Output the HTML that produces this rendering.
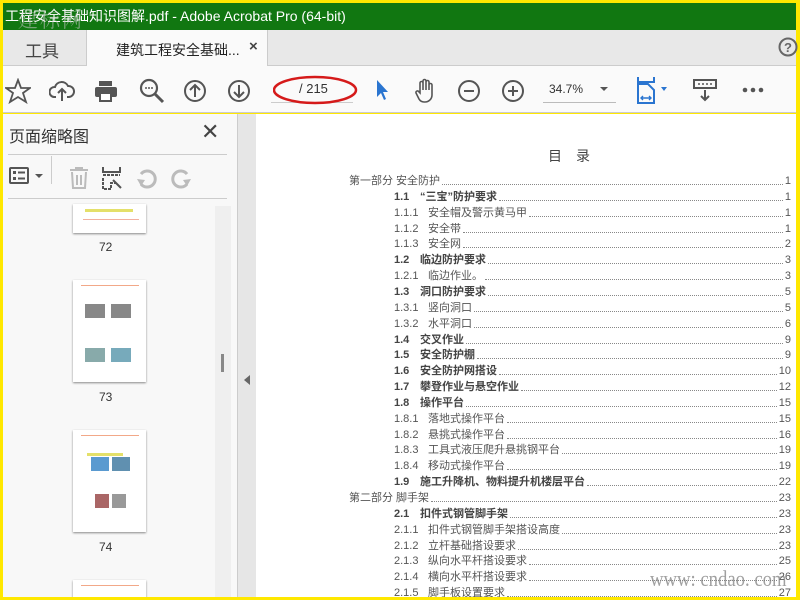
<!DOCTYPE html>
<html style="overflow:hidden"><head><meta charset="utf-8"><style>
*{margin:0;padding:0;box-sizing:border-box}
html,body{width:800px;height:600px;overflow:hidden}
body{background:#ffe800;position:relative;font-family:"Liberation Sans","Noto Sans CJK SC",sans-serif}
.abs{position:absolute}
#title{left:3px;top:3px;width:793px;height:27px;background:#117711;color:#fff;font-size:14px;line-height:27px;padding-left:2px;white-space:nowrap}
#tabs{left:3px;top:30px;width:793px;height:36px;background:#e8e8e8;border-bottom:1px solid #ccc}
#tb{left:3px;top:66px;width:793px;height:47px;background:#fafafa;border-bottom:1px solid #ccc}
#side{left:3px;top:114px;width:234px;height:483px;background:#f8f8f8}
#split{left:237px;top:114px;width:19px;height:483px;background:#e6e6e6;border-left:1px solid #ccc}
#page{left:256px;top:114px;width:540px;height:483px;background:#fff}
.row{position:absolute;left:349px;width:442px;height:15px;display:flex;align-items:flex-end;font-size:11px;color:#555;line-height:13px;white-space:nowrap}
.row .d{flex:1;border-bottom:1px dotted #888;margin:0 2px 3px 2px}
.b{font-weight:bold;color:#444}
svg{position:absolute}
.th{position:absolute;left:70px;width:73px;background:#fff;box-shadow:0 1px 2px #888}
.lbl{position:absolute;left:96px;font-size:12px;color:#333}
</style></head><body>
<div id="title" class="abs">工程安全基础知识图解.pdf - Adobe Acrobat Pro (64-bit)</div>
<div class="abs" style="left:18px;top:4px;font-size:20px;color:rgba(200,200,200,.55);font-family:'Noto Serif CJK SC',serif;letter-spacing:2px;white-space:nowrap">建标网</div>
<div id="tabs" class="abs">
 <div class="abs" style="left:22px;top:7px;font-size:17px;color:#444">工具</div>
 <div class="abs" style="left:83px;top:0;width:182px;height:37px;background:#fafafa;border-left:1px solid #ccc;border-right:1px solid #ccc"></div>
 <div class="abs" style="left:113px;top:10px;font-size:14px;color:#222;white-space:nowrap">建筑工程安全基础...</div>
 <div class="abs" style="left:246px;top:8px;font-size:15px;color:#444;font-weight:bold">×</div>
 <svg style="left:775px;top:7px" width="20" height="20"><circle cx="10" cy="10" r="8.5" fill="none" stroke="#666" stroke-width="2"/><text x="10" y="15" font-size="13" font-weight="bold" text-anchor="middle" fill="#666" font-family="Liberation Sans">?</text></svg>
</div>
<div id="tb" class="abs">
 <svg style="left:2px;top:12px" width="26" height="26"><polygon points="13,2 16,10 25,10 18,15 21,24 13,19 5,24 8,15 1,10 10,10" fill="none" stroke="#555" stroke-width="1.8"/></svg>
 <svg style="left:46px;top:12px" width="26" height="26"><path d="M7 19 H5 A5 5 0 0 1 6 9 A7 7 0 0 1 19 8 A5 5 0 0 1 20 19 H18 M13 23 V11 M9 15 L13 11 L17 15" fill="none" stroke="#555" stroke-width="2"/></svg>
 <svg style="left:90px;top:12px" width="26" height="26"><rect x="6" y="3" width="13" height="5" fill="#555"/><rect x="2" y="9" width="22" height="10" rx="2" fill="#555"/><rect x="7" y="15" width="11" height="8" fill="#fff" stroke="#555" stroke-width="2"/></svg>
 <svg style="left:135px;top:11px" width="28" height="28"><circle cx="11" cy="11" r="8" fill="none" stroke="#555" stroke-width="2.2"/><path d="M17 17 L25 25" stroke="#555" stroke-width="3"/><circle cx="8" cy="11" r="1" fill="#555"/><circle cx="11" cy="11" r="1" fill="#555"/><circle cx="14" cy="11" r="1" fill="#555"/></svg>
 <svg style="left:179px;top:12px" width="26" height="26"><circle cx="13" cy="13" r="10" fill="none" stroke="#555" stroke-width="2"/><path d="M13 19 V8 M8 12 L13 7 L18 12" fill="none" stroke="#555" stroke-width="2"/></svg>
 <svg style="left:223px;top:12px" width="26" height="26"><circle cx="13" cy="13" r="10" fill="none" stroke="#555" stroke-width="2"/><path d="M13 7 V18 M8 14 L13 19 L18 14" fill="none" stroke="#555" stroke-width="2"/></svg>
 <div class="abs" style="left:268px;top:36px;width:82px;height:1px;background:#ccc"></div>
 <div class="abs" style="left:296px;top:15px;font-size:13px;color:#333">/ 215</div>
 <svg style="left:270px;top:8px" width="100" height="34"><ellipse cx="42" cy="16" rx="41" ry="13" fill="none" stroke="#d51a1a" stroke-width="2.5"/></svg>
 <svg style="left:371px;top:12px" width="16" height="24"><path d="M3 2 L3 19 L7 15 L10 22 L12 21 L9 14 L14 14 Z" fill="#2a75d0"/></svg>
 <svg style="left:410px;top:11px" width="26" height="28"><path d="M7 16 V6 a1.5 1.5 0 0 1 3 0 V13 V4 a1.5 1.5 0 0 1 3 0 V13 V5 a1.5 1.5 0 0 1 3 0 V13 V8 a1.5 1.5 0 0 1 3 0 V18 a7 7 0 0 1 -7 7 h-1 a6 6 0 0 1 -5 -3 L3 16 a1.5 1.5 0 0 1 3 -1 Z" fill="none" stroke="#555" stroke-width="1.6"/></svg>
 <svg style="left:453px;top:12px" width="26" height="26"><circle cx="13" cy="13" r="10" fill="none" stroke="#555" stroke-width="2"/><path d="M8 13 H18" stroke="#555" stroke-width="2"/></svg>
 <svg style="left:497px;top:12px" width="26" height="26"><circle cx="13" cy="13" r="10" fill="none" stroke="#555" stroke-width="2"/><path d="M8 13 H18 M13 8 V18" stroke="#555" stroke-width="2"/></svg>
 <div class="abs" style="left:546px;top:16px;font-size:12px;color:#333">34.7%</div>
 <div class="abs" style="left:540px;top:36px;width:73px;height:1px;background:#bbb"></div>
 <svg style="left:596px;top:20px" width="10" height="6"><path d="M1 1 H9 L5 5Z" fill="#555"/></svg>
 <svg style="left:633px;top:10px" width="36" height="30"><path d="M2 1 V6 H18 V1" fill="none" stroke="#2a75d0" stroke-width="2"/><path d="M2 8 H12 L18 14 V27 H2 Z" fill="none" stroke="#2a75d0" stroke-width="2"/><path d="M6 22 H14 M7 20 L5 22 L7 24 M13 20 L15 22 L13 24" stroke="#2a75d0" stroke-width="1.4" fill="none"/><path d="M25 11 H31 L28 15Z" fill="#2a75d0"/></svg>
 <svg style="left:689px;top:12px" width="26" height="26"><rect x="2" y="2" width="22" height="8" fill="none" stroke="#555" stroke-width="2"/><path d="M6 6 h2 M10 6 h2 M14 6 h2 M18 6 h2" stroke="#555" stroke-width="1.5"/><path d="M13 12 V22 M9 18 L13 22 L17 18" fill="none" stroke="#555" stroke-width="2"/></svg>
 <svg style="left:738px;top:20px" width="24" height="8"><circle cx="4" cy="4" r="2.3" fill="#555"/><circle cx="12" cy="4" r="2.3" fill="#555"/><circle cx="20" cy="4" r="2.3" fill="#555"/></svg>
</div>
<div id="side" class="abs">
 <div class="abs" style="left:6px;top:9px;font-size:16px;color:#333">页面缩略图</div>
 <div class="abs" style="left:198px;top:5px;font-size:22px;color:#444">✕</div>
 <div class="abs" style="left:5px;top:40px;width:219px;height:1px;background:#ccc"></div>
 <svg style="left:5px;top:52px" width="40" height="22"><rect x="2" y="2" width="18" height="15" rx="1" fill="none" stroke="#555" stroke-width="2"/><rect x="5" y="5" width="3" height="3" fill="#555"/><rect x="5" y="11" width="3" height="3" fill="#555"/><path d="M10 6.5 H17 M10 12.5 H17" stroke="#555" stroke-width="2"/><path d="M27 8 H35 L31 12Z" fill="#555"/></svg>
 <div class="abs" style="left:48px;top:42px;width:1px;height:28px;background:#ccc"></div>
 <svg style="left:64px;top:52px" width="24" height="24"><path d="M3 4 H21 M9 4 V2 H15 V4 M5 6 L6 22 H18 L19 6 M10 9 V19 M14 9 V19" fill="none" stroke="#bbb" stroke-width="2"/></svg>
 <svg style="left:98px;top:52px" width="24" height="24"><path d="M2 1 V6 H19 V1" fill="none" stroke="#555" stroke-width="2"/><path d="M2 9 H19 M2 12 V23 H10 V17 H15" fill="none" stroke="#555" stroke-width="2" stroke-dasharray="3 1"/><path d="M12 14 L20 22" stroke="#555" stroke-width="2"/></svg>
 <svg style="left:132px;top:52px" width="24" height="24"><path d="M6 18 A8 8 0 1 0 6 8" fill="none" stroke="#bbb" stroke-width="3"/><path d="M2 13 L6 20 L10 14Z" fill="#bbb"/></svg>
 <svg style="left:166px;top:52px" width="24" height="24"><path d="M18 18 A8 8 0 1 1 18 8" fill="none" stroke="#bbb" stroke-width="3"/><path d="M22 13 L18 20 L14 14Z" fill="#bbb"/></svg>
 <div class="abs" style="left:5px;top:84px;width:219px;height:1px;background:#ccc"></div>
 <div class="abs" style="left:212px;top:92px;width:16px;height:391px;background:#efefef"></div>
 <div class="abs" style="left:218px;top:240px;width:3px;height:18px;background:#888"></div>
 <div class="th" style="top:90px;height:29px"><div class="abs" style="left:12px;top:5px;width:48px;height:3px;background:#e4e06a"></div><div class="abs" style="left:10px;top:15px;width:56px;height:1px;background:#f2b0a0"></div></div>
 <div class="lbl" style="top:126px">72</div>
 <div class="th" style="top:166px;height:102px"><div class="abs" style="left:8px;top:5px;width:58px;height:1px;background:#f2a888"></div><div class="abs" style="left:12px;top:24px;width:20px;height:14px;background:#888"></div><div class="abs" style="left:38px;top:24px;width:20px;height:14px;background:#888"></div><div class="abs" style="left:12px;top:68px;width:20px;height:14px;background:#8aa"></div><div class="abs" style="left:38px;top:68px;width:20px;height:14px;background:#7ab"></div></div>
 <div class="lbl" style="top:276px">73</div>
 <div class="th" style="top:316px;height:102px"><div class="abs" style="left:8px;top:5px;width:58px;height:1px;background:#f2a888"></div><div class="abs" style="left:14px;top:23px;width:36px;height:3px;background:#e4e06a"></div><div class="abs" style="left:18px;top:27px;width:18px;height:14px;background:#5a9ad0"></div><div class="abs" style="left:39px;top:27px;width:18px;height:14px;background:#6090b0"></div><div class="abs" style="left:22px;top:64px;width:14px;height:14px;background:#a66"></div><div class="abs" style="left:39px;top:64px;width:14px;height:14px;background:#999"></div></div>
 <div class="lbl" style="top:426px">74</div>
 <div class="th" style="top:466px;height:20px"><div class="abs" style="left:8px;top:5px;width:58px;height:1px;background:#f2a888"></div></div>
</div>
<div id="split" class="abs"><svg style="left:5px;top:260px" width="8" height="12"><path d="M7 1 L1 6 L7 11Z" fill="#666"/></svg></div>
<div id="page" class="abs"></div>
<div class="abs" style="left:548px;top:146px;font-size:14px;color:#444;letter-spacing:14px;white-space:nowrap">目录</div>
<div id="toc"></div>
<div class="abs" style="left:650px;top:566px;font-size:22px;color:rgba(120,120,120,.7);font-family:'Liberation Serif',serif;white-space:nowrap;transform:scaleX(.85);transform-origin:left top">www: cndao. com</div>
<div class="abs" style="left:0;top:597px;width:800px;height:3px;background:#ffe800"></div>
<script>
var d=[[0,"第一部分  安全防护","1"],[2,"1.1","“三宝”防护要求","1"],[3,"1.1.1","安全帽及警示黄马甲","1"],[3,"1.1.2","安全带","1"],[3,"1.1.3","安全网","2"],[2,"1.2","临边防护要求","3"],[3,"1.2.1","临边作业。","3"],[2,"1.3","洞口防护要求","5"],[3,"1.3.1","竖向洞口","5"],[3,"1.3.2","水平洞口","6"],[2,"1.4","交叉作业","9"],[2,"1.5","安全防护棚","9"],[2,"1.6","安全防护网搭设","10"],[2,"1.7","攀登作业与悬空作业","12"],[2,"1.8","操作平台","15"],[3,"1.8.1","落地式操作平台","15"],[3,"1.8.2","悬挑式操作平台","16"],[3,"1.8.3","工具式液压爬升悬挑钢平台","19"],[3,"1.8.4","移动式操作平台","19"],[2,"1.9","施工升降机、物料提升机楼层平台","22"],[0,"第二部分  脚手架","23"],[2,"2.1","扣件式钢管脚手架","23"],[3,"2.1.1","扣件式钢管脚手架搭设高度","23"],[3,"2.1.2","立杆基础搭设要求","23"],[3,"2.1.3","纵向水平杆搭设要求","25"],[3,"2.1.4","横向水平杆搭设要求","26"],[3,"2.1.5","脚手板设置要求","27"]];
var h="";d.forEach(function(r,i){var y=173+i*15.85;
if(r[0]==0)h+='<div class="row" style="top:'+y+'px"><span>'+r[1]+'</span><span class="d"></span><span>'+r[2]+'</span></div>';
else if(r[0]==2)h+='<div class="row" style="top:'+y+'px"><span class="b" style="padding-left:45px;width:71px">'+r[1]+'</span><span class="b">'+r[2]+'</span><span class="d"></span><span>'+r[3]+'</span></div>';
else h+='<div class="row" style="top:'+y+'px"><span style="padding-left:45px;width:79px">'+r[1]+'</span><span>'+r[2]+'</span><span class="d"></span><span>'+r[3]+'</span></div>';});
document.getElementById("toc").innerHTML=h;
</script>
</body></html>
